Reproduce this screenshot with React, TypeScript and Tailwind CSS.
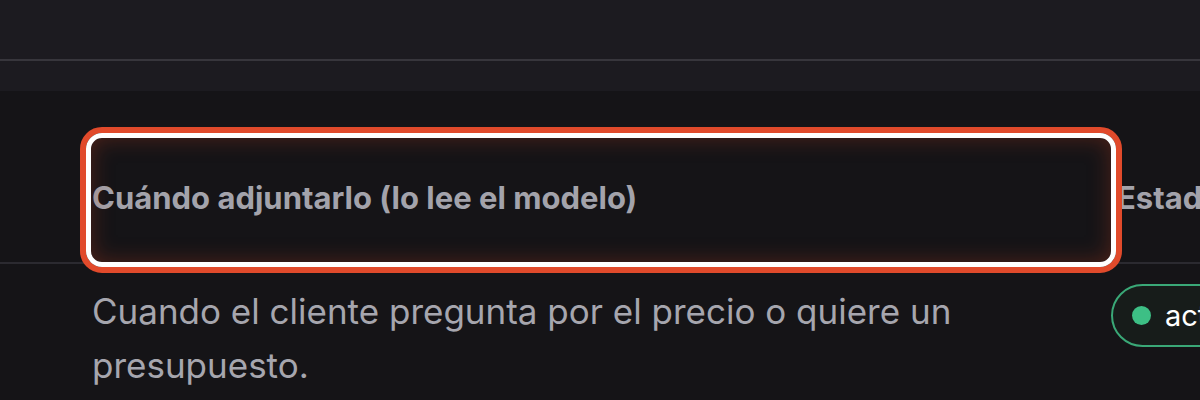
import React from "react";

const App: React.FC = () => {
  return (
    <div className="relative w-[1200px] h-[400px] overflow-hidden bg-[#151417] font-['Inter',sans-serif]">
      {/* Top bar */}
      <div className="bg-[#1c1b20]">
        <div className="h-[61px] border-b-2 border-[#37363c]" />
        <div className="h-[30px]" />
      </div>

      {/* Table header */}
      <div className="flex h-[173px] border-b-2 border-[#2b2a30]">
        <div className="w-[1117px] shrink-0 pl-[92px] pt-[87px]">
          <span className="text-[31px] leading-[40px] font-bold text-[#a3a3ab] whitespace-nowrap">
            Cuándo adjuntarlo (lo lee el modelo)
          </span>
        </div>
        <div className="pt-[87px]">
          <span className="text-[31px] leading-[40px] font-bold text-[#a3a3ab] whitespace-nowrap">
            Estado
          </span>
        </div>
      </div>

      {/* Table row */}
      <div className="flex pt-[20px]">
        <div className="w-[1111px] shrink-0 pl-[92px] pr-[120px]">
          <p className="text-[35px] leading-[54px] text-[#a6a6ae]">
            Cuando el cliente pregunta por el precio o quiere un presupuesto.
          </p>
        </div>
        <div>
          <span className="flex items-center gap-[14px] h-[63px] pl-[19px] pr-[24px] rounded-full border-2 border-[#3aa877] bg-[#171c1a] whitespace-nowrap">
            <span className="w-[19px] h-[19px] rounded-full bg-[#3dbf85]" />
            <span className="text-[29px] text-white">activo</span>
          </span>
        </div>
      </div>

      {/* Highlight annotation */}
      <div className="absolute left-[80px] top-[127px] w-[1042px] h-[146px] rounded-[22px] border-[6px] border-[#e14a2b] pointer-events-none">
        <div className="w-full h-full rounded-[16px] border-[5px] border-white shadow-[inset_0_0_22px_rgba(190,60,30,0.35)]" />
      </div>
    </div>
  );
};

export default App;
